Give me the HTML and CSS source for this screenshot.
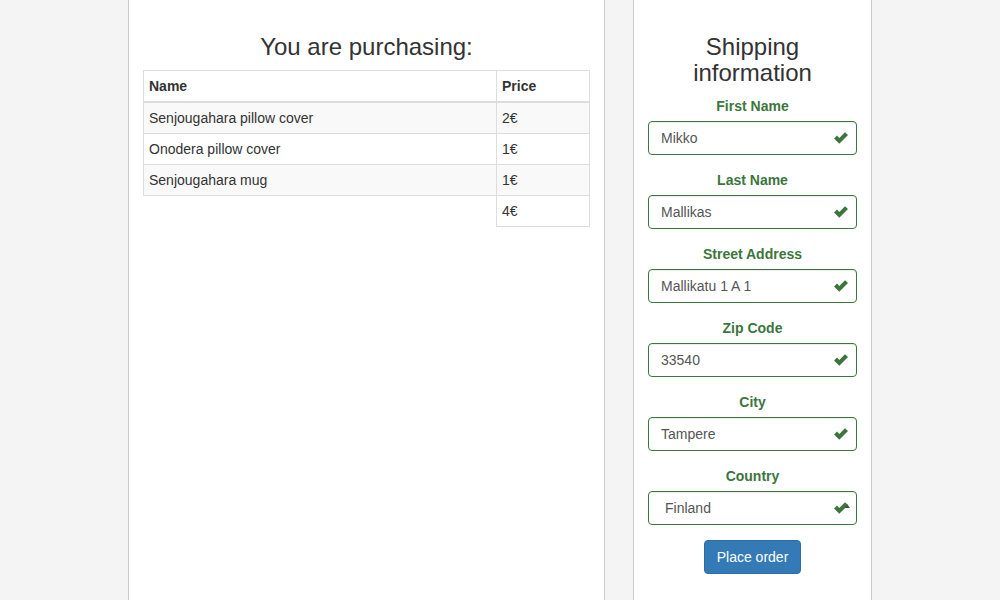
FILE: index.html
```html
<!DOCTYPE html>
<html>
<head>
<meta charset="utf-8">
<link rel="stylesheet" href="styles.css">
</head>
<body>
<div class="wrap">
  <section class="panel panel-main">
    <h3 class="title">You are purchasing:</h3>
    <table class="cart">
      <thead>
        <tr><th class="c-name">Name</th><th class="c-price">Price</th></tr>
      </thead>
      <tbody>
        <tr class="odd"><td>Senjougahara pillow cover</td><td>2€</td></tr>
        <tr><td>Onodera pillow cover</td><td>1€</td></tr>
        <tr class="odd"><td>Senjougahara mug</td><td>1€</td></tr>
        <tr class="total"><td class="blank"></td><td>4€</td></tr>
      </tbody>
    </table>
  </section>
  <section class="panel panel-side">
    <h3 class="title title-side">Shipping information</h3>
    <form class="form">
      <div class="group">
        <label class="lbl">First Name</label>
        <div class="field"><input class="ctrl" value="Mikko"><svg class="ok" viewBox="0 0 16 14"><path d="M1 7.5 L4 4.6 L6.3 6.9 L12 1.2 L15 4.1 L6.3 12.8 Z" fill="#3c763d"/></svg></div>
      </div>
      <div class="group">
        <label class="lbl">Last Name</label>
        <div class="field"><input class="ctrl" value="Mallikas"><svg class="ok" viewBox="0 0 16 14"><path d="M1 7.5 L4 4.6 L6.3 6.9 L12 1.2 L15 4.1 L6.3 12.8 Z" fill="#3c763d"/></svg></div>
      </div>
      <div class="group">
        <label class="lbl">Street Address</label>
        <div class="field"><input class="ctrl" value="Mallikatu 1 A 1"><svg class="ok" viewBox="0 0 16 14"><path d="M1 7.5 L4 4.6 L6.3 6.9 L12 1.2 L15 4.1 L6.3 12.8 Z" fill="#3c763d"/></svg></div>
      </div>
      <div class="group">
        <label class="lbl">Zip Code</label>
        <div class="field"><input class="ctrl" value="33540"><svg class="ok" viewBox="0 0 16 14"><path d="M1 7.5 L4 4.6 L6.3 6.9 L12 1.2 L15 4.1 L6.3 12.8 Z" fill="#3c763d"/></svg></div>
      </div>
      <div class="group">
        <label class="lbl">City</label>
        <div class="field"><input class="ctrl" value="Tampere"><svg class="ok" viewBox="0 0 16 14"><path d="M1 7.5 L4 4.6 L6.3 6.9 L12 1.2 L15 4.1 L6.3 12.8 Z" fill="#3c763d"/></svg></div>
      </div>
      <div class="group">
        <label class="lbl">Country</label>
        <div class="field">
          <select class="ctrl sel"><option>Finland</option></select>
          <svg class="arrow" viewBox="0 0 8 8"><path d="M1 6 L4 2 L7 6 Z" fill="#444"/></svg>
          <svg class="ok" viewBox="0 0 16 14"><path d="M1 7.5 L4 4.6 L6.3 6.9 L12 1.2 L15 4.1 L6.3 12.8 Z" fill="#3c763d"/></svg>
        </div>
      </div>
      <div class="actions"><button type="button" class="btn">Place order</button></div>
    </form>
  </section>
</div>
</body>
</html>
```

FILE: styles.css
```css
* { box-sizing: border-box; }
html, body { margin: 0; padding: 0; }
body {
  background: #f4f4f4;
  font-family: "Liberation Sans", Arial, sans-serif;
  font-size: 14px;
  line-height: 20px;
  color: #333;
  height: 600px;
  overflow: hidden;
}
.wrap {
  display: flex;
  justify-content: center;
  gap: 28px;
  height: 600px;
}
.panel {
  background: #fff;
  border: 1px solid #ccc;
  border-top: none;
  border-bottom: none;
  padding: 14px 14px 0;
  height: 620px;
}
.panel-main { width: 477px; }
.panel-side { width: 239px; }
.title {
  margin: 20px 0 10px;
  font-size: 24px;
  font-weight: 400;
  line-height: 26.4px;
  text-align: center;
  color: #333;
}
.title-side { margin: 20px 0 9px; }
.cart {
  width: 100%;
  border-collapse: collapse;
  border-spacing: 0;
}
.cart th, .cart td {
  border: 1px solid #ddd;
  padding: 5px;
  line-height: 20px;
  text-align: left;
  vertical-align: top;
}
.cart th { font-weight: 700; border-bottom-width: 2px; }
.cart .c-price { width: 93px; }
.cart tr.odd td { background: #f9f9f9; }
.cart td.blank { border: none; }
.group { margin-bottom: 15px; text-align: center; }
.lbl {
  display: block;
  font-weight: 700;
  color: #3c763d;
  margin-bottom: 5px;
  line-height: 20px;
}
.field { position: relative; }
.ctrl {
  display: block;
  width: 100%;
  height: 34px;
  padding: 6px 34px 6px 12px;
  font-family: "Liberation Sans", Arial, sans-serif;
  font-size: 14px;
  line-height: 20px;
  color: #555;
  background: #fff;
  border: 1px solid #3c763d;
  border-radius: 4px;
  box-shadow: inset 0 1px 1px rgba(0,0,0,.075);
  outline: none;
}
.sel {
  -webkit-appearance: none;
  appearance: none;
  padding-left: 16px;
}
.ok {
  position: absolute;
  right: 8px;
  top: 10px;
  width: 16px;
  height: 14px;
}
.arrow {
  position: absolute;
  right: 6px;
  top: 11px;
  width: 8px;
  height: 8px;
}
.actions { text-align: center; }
.btn {
  display: inline-block;
  padding: 6px 12px;
  font-family: "Liberation Sans", Arial, sans-serif;
  font-size: 14px;
  line-height: 20px;
  color: #fff;
  background: #337ab7;
  border: 1px solid #2e6da4;
  border-radius: 4px;
}
```
